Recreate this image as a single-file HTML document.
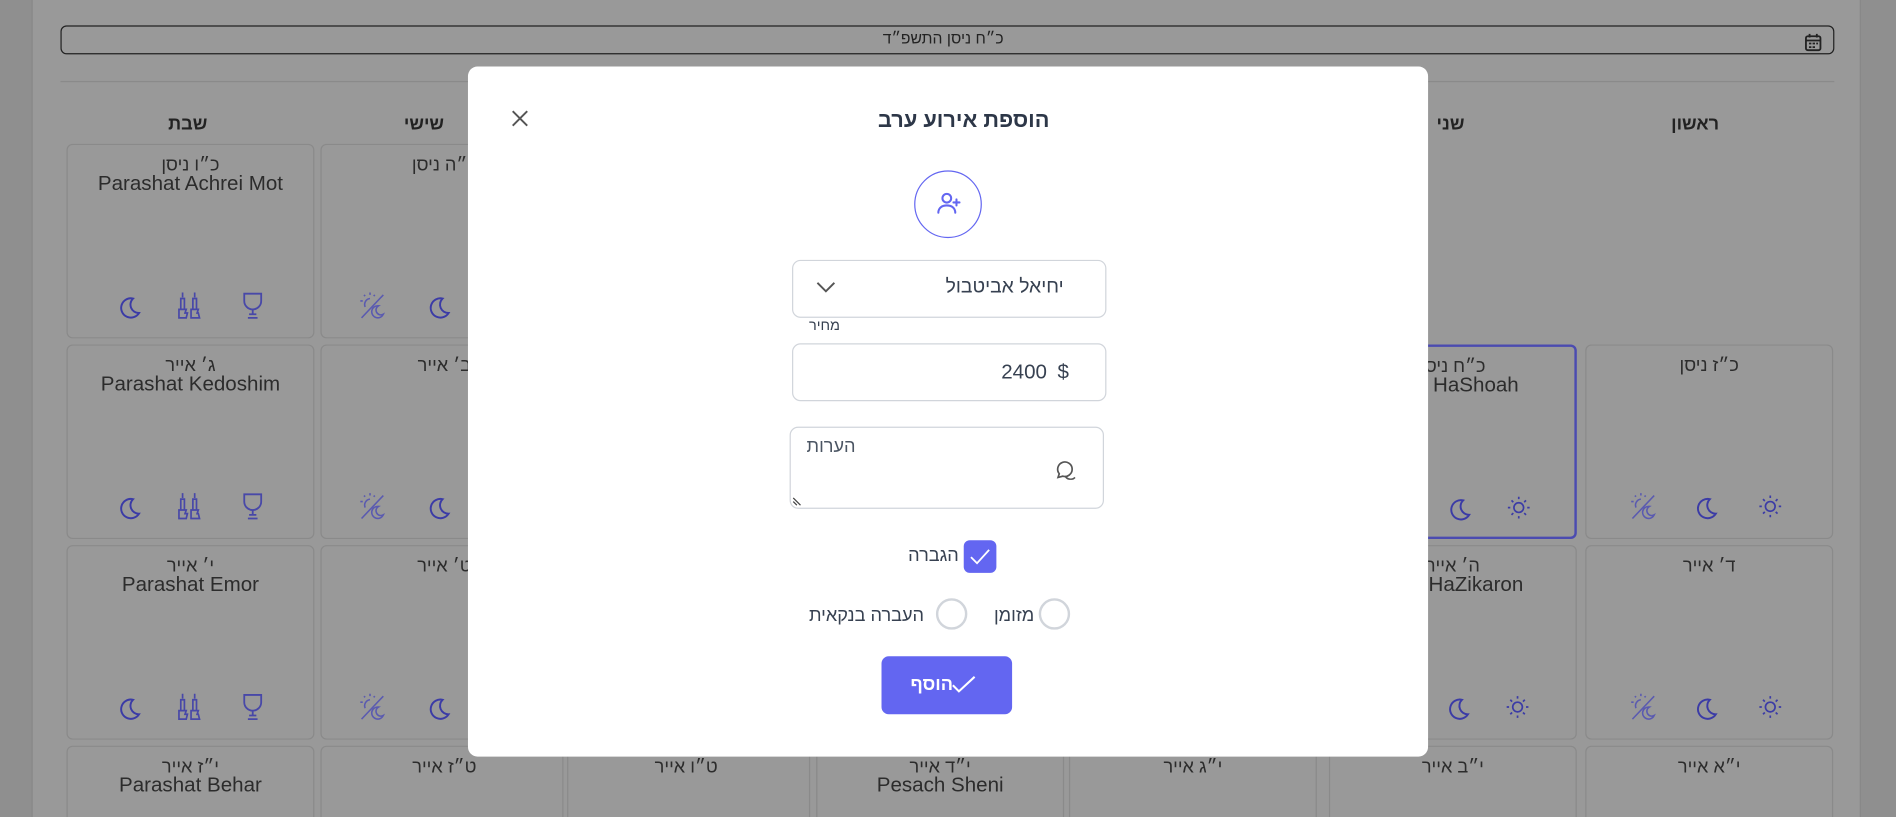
<!DOCTYPE html>
<html><head><meta charset="utf-8"><style>
*{box-sizing:border-box;margin:0;padding:0}
html,body{width:1896px;height:817px;overflow:hidden;background:#999}
body{font-family:"Liberation Sans","Noto Sans CJK SC",sans-serif;position:relative}
#w{position:absolute;left:0;top:0;width:1568px;height:676px;overflow:hidden;transform:scale(1.2092,1.2086);transform-origin:0 0;background:#999}
.a{position:absolute}
.strip{position:absolute;top:0;height:100%;background:#8f8f8f}
.cell{position:absolute;width:205px;height:161px;border:1px solid #8a8a8a;border-radius:5px}
.hd{position:absolute;top:8px;left:0;right:0;text-align:center;font-size:15px;color:#2c2c2c;direction:rtl}
.en{position:absolute;top:22px;left:0;right:0;text-align:center;font-size:17px;color:#2c2c2c}
.ic{position:absolute;top:121px;width:22px;height:24px}
.dh{position:absolute;top:94px;font-size:15px;font-weight:bold;color:#222;direction:rtl}
.modal{position:absolute;left:387px;top:55px;width:794px;height:571px;background:#fff;border-radius:8px}
.inp{position:absolute;border:1px solid #d1d5db;border-radius:7px;background:#fff}
.t{position:absolute;color:#374151;direction:rtl;white-space:nowrap}
</style></head><body><div id="w">
<div class="strip" style="left:0;width:27px;border-right:1px solid #888"></div>
<div class="strip" style="left:1538px;width:30px;border-left:1px solid #888"></div>
<div class="a" style="left:50px;top:21px;width:1467px;height:24px;border:1px solid #222;border-radius:5px"></div>
<div class="a" style="left:700px;top:24px;width:160px;text-align:center;font-size:13px;color:#222;direction:rtl">כ״ח ניסן התשפ״ד</div>
<svg class="a" style="left:1492px;top:27px" width="15" height="16" viewBox="0 0 15 16"><rect x="1.5" y="3" width="12" height="11.5" rx="1.5" fill="none" stroke="#222" stroke-width="1.5"/><path d="M1.5 6.5h12M4.5 1v3M10.5 1v3" stroke="#222" stroke-width="1.5"/><path d="M4 9h2M7 9h2M10 9h1.5M4 12h2M7 12h2" stroke="#222" stroke-width="1.4"/></svg>
<div class="a" style="left:50px;top:67px;width:1467px;height:1px;background:#8a8a8a"></div>
<div class="dh" style="left:139px">שבת</div>
<div class="dh" style="left:334px">שישי</div>
<div class="dh" style="left:1188px">שני</div>
<div class="dh" style="left:1382px">ראשון</div>

<div class="cell" style="left:55px;top:119px"><div class="hd">כ״ו ניסן</div><div class="en">Parashat Achrei Mot</div>
<svg class="ic" style="left:40px" viewBox="0 0 22 24"><path d="M14 6a8 8 0 1 0 5 12A7 7 0 0 1 14 6z" fill="none" stroke="#3b3ba6" stroke-width="1.6"/></svg>
<svg class="ic" style="left:89px" viewBox="0 0 22 24"><path d="M6 1v4M16 1v4M4.5 6h3v9h-3zM14.5 6h3v9h-3zM3 15h6l-1 3h2l-1 4H3zM13 15h6l-1 3h1l1 4h-7z" fill="none" stroke="#4848a8" stroke-width="1.4"/></svg>
<svg class="ic" style="left:142px" viewBox="0 0 22 24"><path d="M4 2h14v6a7 7 0 0 1-14 0zM11 15v4M7 22h8M8 19h6" fill="none" stroke="#4848a8" stroke-width="1.5"/></svg></div>
<div class="cell" style="left:265px;top:119px"><div class="hd">כ״ה ניסן</div>
<svg class="ic" style="left:31px" viewBox="0 0 22 24"><path d="M2 22L20 3M9 6a5 5 0 0 0-4 7M9 1v2M3 8H1M4 3l1 1M13 3l-1 1M16 12a5 5 0 1 0 4 7 4 4 0 0 1-4-7z" fill="none" stroke="#5a5ab0" stroke-width="1.3"/></svg>
<svg class="ic" style="left:86px" viewBox="0 0 22 24"><path d="M14 6a8 8 0 1 0 5 12A7 7 0 0 1 14 6z" fill="none" stroke="#3b3ba6" stroke-width="1.6"/></svg></div>

<div class="cell" style="left:55px;top:285px"><div class="hd">ג׳ אייר</div><div class="en">Parashat Kedoshim</div>
<svg class="ic" style="left:40px" viewBox="0 0 22 24"><path d="M14 6a8 8 0 1 0 5 12A7 7 0 0 1 14 6z" fill="none" stroke="#3b3ba6" stroke-width="1.6"/></svg>
<svg class="ic" style="left:89px" viewBox="0 0 22 24"><path d="M6 1v4M16 1v4M4.5 6h3v9h-3zM14.5 6h3v9h-3zM3 15h6l-1 3h2l-1 4H3zM13 15h6l-1 3h1l1 4h-7z" fill="none" stroke="#4848a8" stroke-width="1.4"/></svg>
<svg class="ic" style="left:142px" viewBox="0 0 22 24"><path d="M4 2h14v6a7 7 0 0 1-14 0zM11 15v4M7 22h8M8 19h6" fill="none" stroke="#4848a8" stroke-width="1.5"/></svg></div>
<div class="cell" style="left:265px;top:285px"><div class="hd">ב׳ אייר</div>
<svg class="ic" style="left:31px" viewBox="0 0 22 24"><path d="M2 22L20 3M9 6a5 5 0 0 0-4 7M9 1v2M3 8H1M4 3l1 1M13 3l-1 1M16 12a5 5 0 1 0 4 7 4 4 0 0 1-4-7z" fill="none" stroke="#5a5ab0" stroke-width="1.3"/></svg>
<svg class="ic" style="left:86px" viewBox="0 0 22 24"><path d="M14 6a8 8 0 1 0 5 12A7 7 0 0 1 14 6z" fill="none" stroke="#3b3ba6" stroke-width="1.6"/></svg></div>
<div class="cell" style="left:1099px;top:285px;border:2px solid #4b4bb0"><div class="hd">כ״ח ניסן</div><div class="en">Yom HaShoah</div>
<svg class="ic" style="left:95px" viewBox="0 0 22 24"><path d="M14 6a8 8 0 1 0 5 12A7 7 0 0 1 14 6z" fill="none" stroke="#3b3ba6" stroke-width="1.6"/></svg>
<svg class="ic" style="left:144px" viewBox="0 0 22 24"><circle cx="11" cy="12" r="4" fill="none" stroke="#3b3ba6" stroke-width="1.4"/><path d="M11 3v2M11 19v2M2 12h2M18 12h2M5 6l1.5 1.5M17 6l-1.5 1.5M5 18l1.5-1.5M17 18l-1.5-1.5" stroke="#3b3ba6" stroke-width="1.4"/></svg></div>
<div class="cell" style="left:1311px;top:285px"><div class="hd">כ״ז ניסן</div>
<svg class="ic" style="left:36px" viewBox="0 0 22 24"><path d="M2 22L20 3M9 6a5 5 0 0 0-4 7M9 1v2M3 8H1M4 3l1 1M13 3l-1 1M16 12a5 5 0 1 0 4 7 4 4 0 0 1-4-7z" fill="none" stroke="#5a5ab0" stroke-width="1.3"/></svg>
<svg class="ic" style="left:88px" viewBox="0 0 22 24"><path d="M14 6a8 8 0 1 0 5 12A7 7 0 0 1 14 6z" fill="none" stroke="#3b3ba6" stroke-width="1.6"/></svg>
<svg class="ic" style="left:141px" viewBox="0 0 22 24"><circle cx="11" cy="12" r="4" fill="none" stroke="#3b3ba6" stroke-width="1.4"/><path d="M11 3v2M11 19v2M2 12h2M18 12h2M5 6l1.5 1.5M17 6l-1.5 1.5M5 18l1.5-1.5M17 18l-1.5-1.5" stroke="#3b3ba6" stroke-width="1.4"/></svg></div>

<div class="cell" style="left:55px;top:451px"><div class="hd">י׳ אייר</div><div class="en">Parashat Emor</div>
<svg class="ic" style="left:40px" viewBox="0 0 22 24"><path d="M14 6a8 8 0 1 0 5 12A7 7 0 0 1 14 6z" fill="none" stroke="#3b3ba6" stroke-width="1.6"/></svg>
<svg class="ic" style="left:89px" viewBox="0 0 22 24"><path d="M6 1v4M16 1v4M4.5 6h3v9h-3zM14.5 6h3v9h-3zM3 15h6l-1 3h2l-1 4H3zM13 15h6l-1 3h1l1 4h-7z" fill="none" stroke="#4848a8" stroke-width="1.4"/></svg>
<svg class="ic" style="left:142px" viewBox="0 0 22 24"><path d="M4 2h14v6a7 7 0 0 1-14 0zM11 15v4M7 22h8M8 19h6" fill="none" stroke="#4848a8" stroke-width="1.5"/></svg></div>
<div class="cell" style="left:265px;top:451px"><div class="hd">ט׳ אייר</div>
<svg class="ic" style="left:31px" viewBox="0 0 22 24"><path d="M2 22L20 3M9 6a5 5 0 0 0-4 7M9 1v2M3 8H1M4 3l1 1M13 3l-1 1M16 12a5 5 0 1 0 4 7 4 4 0 0 1-4-7z" fill="none" stroke="#5a5ab0" stroke-width="1.3"/></svg>
<svg class="ic" style="left:86px" viewBox="0 0 22 24"><path d="M14 6a8 8 0 1 0 5 12A7 7 0 0 1 14 6z" fill="none" stroke="#3b3ba6" stroke-width="1.6"/></svg></div>
<div class="cell" style="left:1099px;top:451px"><div class="hd">ה׳ אייר</div><div class="en">Yom HaZikaron</div>
<svg class="ic" style="left:95px" viewBox="0 0 22 24"><path d="M14 6a8 8 0 1 0 5 12A7 7 0 0 1 14 6z" fill="none" stroke="#3b3ba6" stroke-width="1.6"/></svg>
<svg class="ic" style="left:144px" viewBox="0 0 22 24"><circle cx="11" cy="12" r="4" fill="none" stroke="#3b3ba6" stroke-width="1.4"/><path d="M11 3v2M11 19v2M2 12h2M18 12h2M5 6l1.5 1.5M17 6l-1.5 1.5M5 18l1.5-1.5M17 18l-1.5-1.5" stroke="#3b3ba6" stroke-width="1.4"/></svg></div>
<div class="cell" style="left:1311px;top:451px"><div class="hd">ד׳ אייר</div>
<svg class="ic" style="left:36px" viewBox="0 0 22 24"><path d="M2 22L20 3M9 6a5 5 0 0 0-4 7M9 1v2M3 8H1M4 3l1 1M13 3l-1 1M16 12a5 5 0 1 0 4 7 4 4 0 0 1-4-7z" fill="none" stroke="#5a5ab0" stroke-width="1.3"/></svg>
<svg class="ic" style="left:88px" viewBox="0 0 22 24"><path d="M14 6a8 8 0 1 0 5 12A7 7 0 0 1 14 6z" fill="none" stroke="#3b3ba6" stroke-width="1.6"/></svg>
<svg class="ic" style="left:141px" viewBox="0 0 22 24"><circle cx="11" cy="12" r="4" fill="none" stroke="#3b3ba6" stroke-width="1.4"/><path d="M11 3v2M11 19v2M2 12h2M18 12h2M5 6l1.5 1.5M17 6l-1.5 1.5M5 18l1.5-1.5M17 18l-1.5-1.5" stroke="#3b3ba6" stroke-width="1.4"/></svg></div>

<div class="cell" style="left:55px;top:617px"><div class="hd">י״ז אייר</div><div class="en">Parashat Behar</div></div>
<div class="cell" style="left:265px;top:617px"><div class="hd">ט״ז אייר</div></div>
<div class="cell" style="left:465px;top:617px"><div class="hd">ט״ו אייר</div></div>
<div class="cell" style="left:675px;top:617px"><div class="hd">י״ד אייר</div><div class="en">Pesach Sheni</div></div>
<div class="cell" style="left:884px;top:617px"><div class="hd">י״ג אייר</div></div>
<div class="cell" style="left:1099px;top:617px"><div class="hd">י״ב אייר</div></div>
<div class="cell" style="left:1311px;top:617px"><div class="hd">י״א אייר</div></div>

<div class="modal">
<svg class="a" style="left:36px;top:36px" width="14" height="14" viewBox="0 0 14 14"><path d="M1 1l12 12M13 1L1 13" stroke="#555" stroke-width="1.6"/></svg>
<div class="t" style="left:290px;top:34px;width:240px;text-align:center;font-size:18px;font-weight:bold;color:#2d3748">הוספת אירוע ערב</div>
<div class="a" style="left:369px;top:86px;width:56px;height:56px;border:1px solid #6366f1;border-radius:50%"></div>
<svg class="a" style="left:386px;top:101px" width="24" height="24" viewBox="0 0 24 24"><circle cx="10" cy="8" r="3.6" fill="none" stroke="#6366f1" stroke-width="1.7"/><path d="M3 20c0-4 3-6 7-6s7 2 7 6M18 9v5M15.5 11.5h5" fill="none" stroke="#6366f1" stroke-width="1.7" stroke-linecap="round"/></svg>
<div class="inp" style="left:268px;top:160px;width:260px;height:48px"></div>
<svg class="a" style="left:288px;top:178px" width="16" height="10" viewBox="0 0 16 10"><path d="M1 1l7 7 7-7" fill="none" stroke="#555" stroke-width="1.6"/></svg>
<div class="t" style="left:395px;top:174px;font-size:16px">יחיאל אביטבול</div>
<div class="t" style="left:282px;top:207px;font-size:12px">מחיר</div>
<div class="inp" style="left:268px;top:229px;width:260px;height:48px"></div>
<div class="t" style="left:441px;top:243px;font-size:17px;direction:ltr">2400 <span style="margin-left:4px">$</span></div>
<div class="inp" style="left:266px;top:298px;width:260px;height:68px"></div>
<div class="t" style="left:280px;top:306px;font-size:15px;color:#4b5563">הערות</div>
<svg class="a" style="left:486px;top:324px" width="18" height="18" viewBox="0 0 18 18"><path d="M3 13a6 6 0 1 1 3 2l-4 1z" fill="none" stroke="#555" stroke-width="1.4"/><path d="M8 15a5 5 0 0 0 8 1" fill="none" stroke="#555" stroke-width="1.4"/></svg>
<svg class="a" style="left:268px;top:354px" width="10" height="10" viewBox="0 0 10 10"><path d="M1 3l6 6M1 6l3 3" stroke="#444" stroke-width="1"/></svg>
<div class="a" style="left:410px;top:392px;width:27px;height:27px;background:#6366f1;border-radius:5px"></div>
<svg class="a" style="left:414px;top:398px" width="19" height="15" viewBox="0 0 19 15"><path d="M2 8l5 5 10-11" fill="none" stroke="#fff" stroke-width="1.5"/></svg>
<div class="t" style="left:364px;top:396px;font-size:15px">הגברה</div>
<div class="a" style="left:472px;top:440px;width:26px;height:26px;border:2px solid #d1d5db;border-radius:50%"></div>
<div class="t" style="left:435px;top:446px;font-size:15px">מזומן</div>
<div class="a" style="left:387px;top:440px;width:26px;height:26px;border:2px solid #d1d5db;border-radius:50%"></div>
<div class="t" style="left:282px;top:446px;font-size:15px">העברה בנקאית</div>
<div class="a" style="left:342px;top:488px;width:108px;height:48px;background:#6366f1;border-radius:6px"></div>
<div class="t" style="left:366px;top:503px;font-size:15px;font-weight:bold;color:#fff">הוסף</div>
<svg class="a" style="left:399px;top:503px" width="22" height="16" viewBox="0 0 22 16"><path d="M2 9l5 5 13-12" fill="none" stroke="#fff" stroke-width="1.7"/></svg>
</div>
</div></body></html>
